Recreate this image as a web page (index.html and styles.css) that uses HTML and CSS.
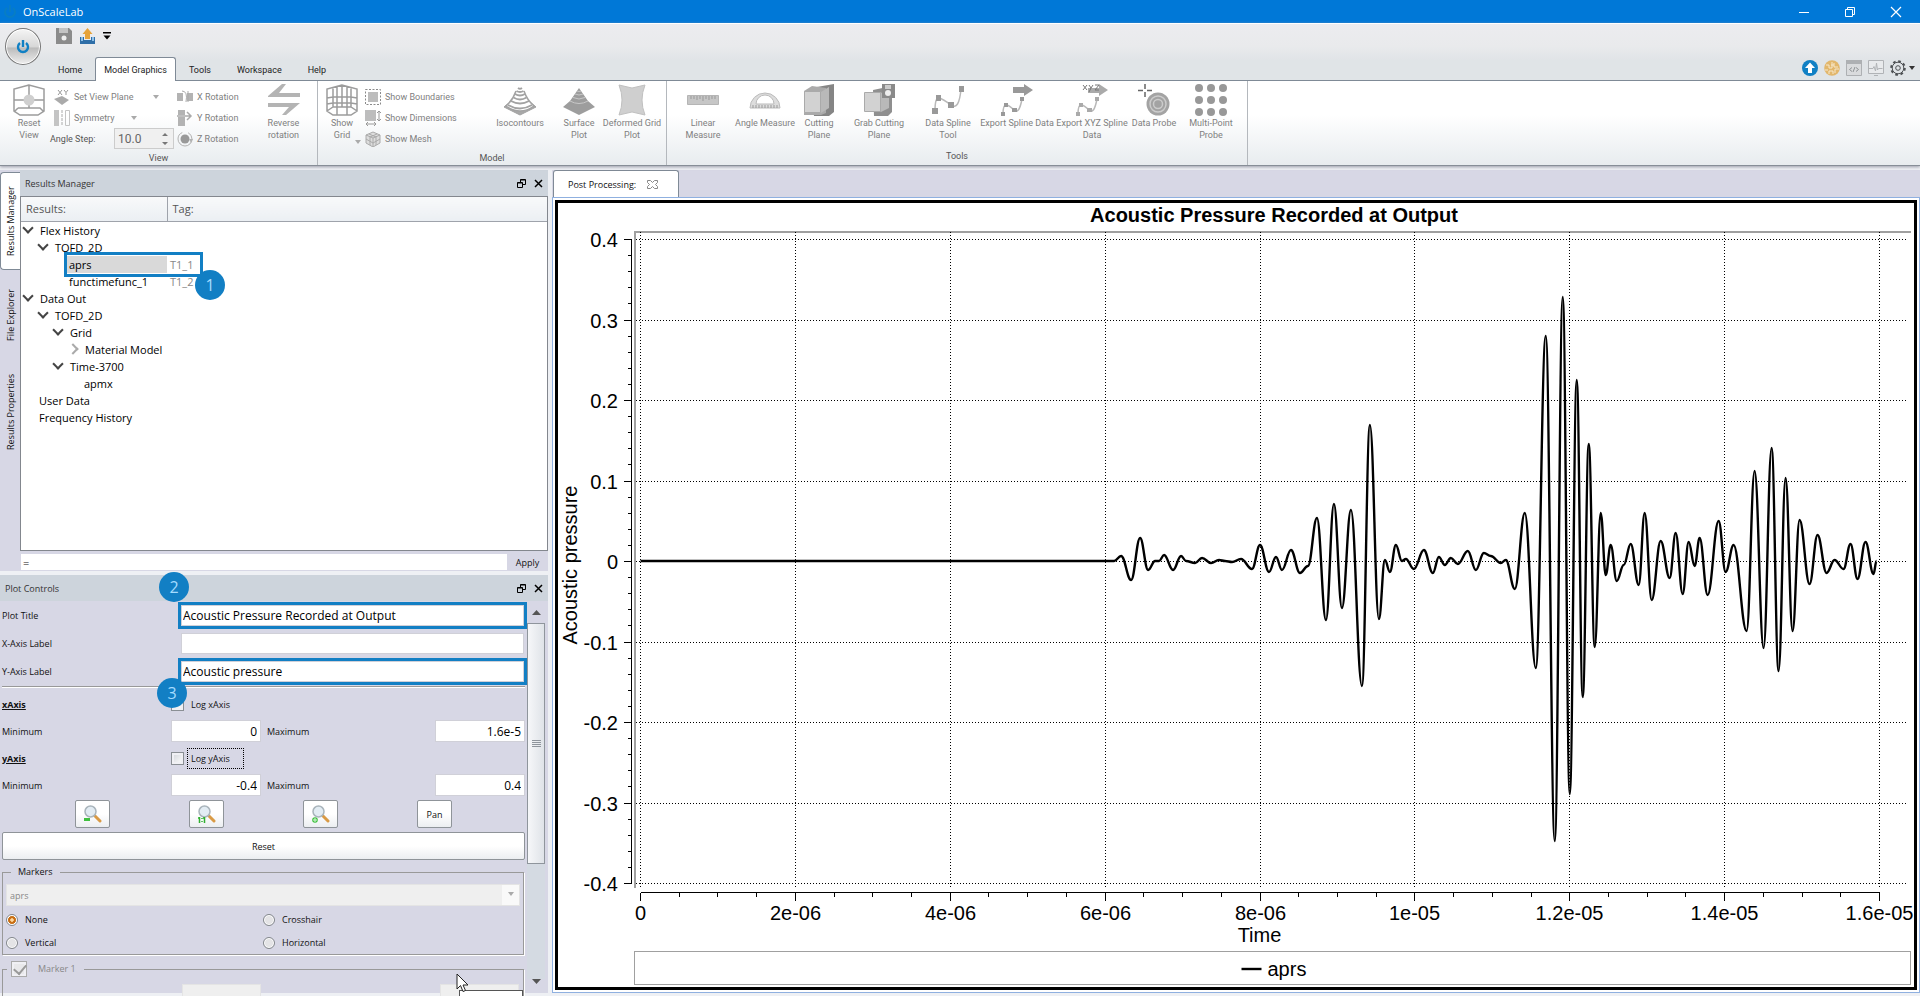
FILE: index.html
```html
<!DOCTYPE html>
<html lang="en">
  <head>
    <meta charset="UTF-8" />
    <meta name="viewport" content="width=device-width, initial-scale=1.0" />
    <title>OnScaleLab</title>
    <link rel="stylesheet" href="styles.css">
  </head>
  <body>
    <header class="titlebar">
      <svg class="app-icon" width="14" height="16" viewBox="0 0 14 16" fill="none" stroke="#0a7fc0" stroke-width="2"><path d="M4 4a5 5 0 1 0 6 0M7 1v7"/></svg>
      <h1>OnScaleLab</h1>
      <div class="window-buttons">
        <button aria-label="Minimize"><svg width="12" height="12" viewBox="0 0 12 12" stroke="#fff"><path d="M1 6.500h10"/></svg></button>
        <button aria-label="Restore"><svg width="12" height="12" viewBox="0 0 12 12" fill="none" stroke="#fff"><path d="M1.500 3.500h7v7h-7zM3.500 3V1.500h7v7H9"/></svg></button>
        <button aria-label="Close"><svg width="12" height="12" viewBox="0 0 12 12" stroke="#fff" stroke-width="1.200"><path d="M1 1l10 10M11 1L1 11"/></svg></button>
      </div>
    </header>

    <section class="ribbon">
      <div class="ribbon-top">
        <button class="orb" aria-label="Application menu">
          <svg width="14" height="16" viewBox="0 0 14 16" fill="none" stroke="#1180c4" stroke-width="2.400"><path d="M4 4a5 5 0 1 0 6 0M7 1v7"/></svg>
        </button>
        <div class="ribbon-bars">
          <div class="quick">
            <button aria-label="Save"><svg width="16" height="16" viewBox="0 0 16 16"><path fill="#8b8b8b" d="M0 0h13l3 3v13H0z"/><path fill="#c3c3c3" d="M3 0h9v5H3z"/><circle cx="8" cy="10" r="2.500" fill="#eee"/></svg></button>
            <button aria-label="Export"><svg width="17" height="16" viewBox="0 0 17 16"><path fill="#2f6fa8" d="M1 9h4v3h7V9h4v7H1z"/><path fill="#8fc0e8" d="M2 9h2v4H2zM13 9h2v4h-2z"/><path fill="#e6a33a" d="M8.500 0l5 6H11v5H6V6H3.500z"/></svg></button>
            <button aria-label="Customize toolbar"><svg width="8" height="8" viewBox="0 0 8 8"><path d="M0 0h8v1.500H0zM0.500 3.500h7L4 7.500z"/></svg></button>
          </div>
          <nav class="tabs">
            <a href="#">Home</a>
            <a href="#" class="active">Model Graphics</a>
            <a href="#">Tools</a>
            <a href="#">Workspace</a>
            <a href="#">Help</a>
          </nav>
        </div>
        <div class="status-icons">
          <svg width="16" height="16" viewBox="0 0 16 16"><circle cx="8" cy="8" r="8" fill="#1180c4"/><path fill="#fff" d="M8 2.500L13 8h-3v5H6V8H3z"/></svg>
          <svg width="16" height="16" viewBox="0 0 16 16"><circle cx="8" cy="8" r="7.800" fill="#e2b76c"/><path d="M2 5h3v3h3V2M5 14v-3h4v3M10 3v4h4M11 13V9h4M1 10h3M7 5h3" fill="none" stroke="#f7e8cb"/></svg>
          <svg width="16" height="16" viewBox="0 0 16 16"><path fill="#d9dbdd" stroke="#adb0b3" d="M.5.5h15v15H.5z"/><path fill="#adb0b3" d="M0 0h16v4H0z"/><path fill="none" stroke="#8f9396" d="M6 7.500L3.500 9.500 6 11.500M10 7.500l2.500 2-2.500 2M9 7l-2 5"/></svg>
          <svg width="16" height="16" viewBox="0 0 16 16" fill="none" stroke="#b0b3b6"><path fill="#e8eaec" d="M.5.5h15v13H.5z"/><path d="M6 15.500h4M1 8.500h4l1-2 1.500 4.500L8.500 3l1 7 1-1.500h4"/></svg>
          <button class="settings" aria-label="Settings">
            <svg width="16" height="16" viewBox="0 0 16 16" fill="none" stroke="#4e5154"><circle cx="8" cy="8" r="6.800" stroke-width="2" stroke-dasharray="2.700 2.640"/><circle cx="8" cy="8" r="5.800"/><circle cx="8" cy="8" r="2.300"/></svg>
            <svg width="6" height="4" viewBox="0 0 6 4"><path d="M0 0h6L3 4z" fill="#333"/></svg>
          </button>
        </div>
      </div>

      <div class="ribbon-body">
        <div class="group group-view">
          <div class="group-items">
            <button class="big">
              <svg width="32" height="32" viewBox="0 0 32 32" fill="none" stroke="#9c9c9c" stroke-width="1.500"><path d="M16 1L1 5v22l6 4h18l6-4V5zM16 1v23M1 16h30M5 24h22l4 4M5 24l-4 4"/><circle cx="16" cy="16" r="5.500" fill="#cfcfcf" stroke="none"/></svg>
              <span>Reset<br>View</span>
            </button>
            <div class="stack stack-plane">
              <button class="small"><svg width="16" height="16" viewBox="0 0 16 16"><path d="M4 1l4 5M8 1L4 6M10 1l2 2.500L14 1M12 3.500V6" stroke="#999" fill="none"/><path fill="#aaa" d="M0 10l8-3 7 4-7 5z"/></svg>Set View Plane<i class="caret far"></i></button>
              <button class="small"><svg width="16" height="16" viewBox="0 0 16 16"><path fill="#c4c4c4" d="M0 0h5v16H0z"/><path d="M8 0v16" stroke="#aaa" stroke-dasharray="3 1"/><path fill="none" stroke="#c4c4c4" d="M11.500.5h4v15h-4z"/></svg>Symmetry<i class="caret"></i></button>
              <div class="angle"><label for="angle">Angle Step:</label><div class="spin"><input id="angle" type="text" value="10.0" disabled><svg width="6" height="14" viewBox="0 0 6 14" fill="#777"><path d="M0 4h6L3 1zM0 10h6l-3 3z"/></svg></div></div>
            </div>
            <div class="stack stack-rotation">
              <button class="small"><svg width="16" height="16" viewBox="0 0 16 16" fill="#b3b3b3"><path d="M0 4h6v8H0zM10 4h6v8h-6z"/><path fill="none" stroke="#aaa" d="M5 2q6 0 4 11M11 2v11"/></svg>X Rotation</button>
              <button class="small"><svg width="16" height="16" viewBox="0 0 16 16" fill="#b3b3b3"><path d="M1 0h7v5H1zM1 7h7v9H1z"/><path fill="none" stroke="#aaa" stroke-width="1.500" d="M0 6h13M10 2l4 4-4 4"/></svg>Y Rotation</button>
              <button class="small"><svg width="16" height="16" viewBox="0 0 16 16"><circle cx="8" cy="8" r="4.500" fill="#999"/><circle cx="8" cy="8" r="7" fill="none" stroke="#b3b3b3" stroke-dasharray="30 6"/><path fill="#b3b3b3" d="M12 8h4l-2 4z"/></svg>Z Rotation</button>
            </div>
            <button class="big">
              <svg width="32" height="32" viewBox="0 0 32 32" fill="#b4b4b4"><path d="M0 12L14 0h4l-7 9h21v4H0zM32 19L18 31h-4l7-8H0v-4z"/></svg>
              <span>Reverse<br>rotation</span>
            </button>
          </div>
          <div class="group-name">View</div>
        </div>

        <div class="group group-model">
          <div class="group-items">
            <button class="big">
              <svg width="32" height="32" viewBox="0 0 32 32" fill="none" stroke="#9c9c9c" stroke-width="1.500"><path d="M16 1L1 5v22l6 4h18l6-4V5zM16 1v22M1 14l6-1h18l6 1M1 27l6-4h18l6 4M7 3v20M25 3v20M11 2v29M21 2v29M1 20l6-1h18l6 1"/></svg>
              <span>Show<br>Grid</span><i class="caret corner"></i>
            </button>
            <div class="stack stack-show">
              <button class="small"><svg width="16" height="16" viewBox="0 0 16 16"><path fill="#bdbdbd" d="M3 3h10v10H3z"/><path fill="none" stroke="#8a8a8a" stroke-dasharray="2 1.500" d="M.5.5h15v15H.5z"/></svg>Show Boundaries</button>
              <button class="small"><svg width="16" height="16" viewBox="0 0 16 16"><path fill="#bdbdbd" d="M0 0h11v11H0z"/><path fill="none" stroke="#999" d="M14 1v10M12 3l2-2 2 2M12 9l2 2 2-2M1 14h10M3 12l-2 2 2 2M9 12l2 2-2 2"/></svg>Show Dimensions</button>
              <button class="small"><svg width="16" height="16" viewBox="0 0 16 16" fill="#ddd" stroke="#aaa"><path d="M8 1l7 3v8l-7 4-7-4V4z"/><path fill="none" d="M1 4l7 3 7-3M8 7v9M1 8l7 4 7-4M4 3l7 3v8M12 3L5 6v8"/></svg>Show Mesh</button>
            </div>
            <button class="big">
              <svg width="32" height="32" viewBox="0 0 32 32" fill="none" stroke="#a2a2a2"><path fill="#a8a8a8" d="M0 23l6-5 10 7 10-7 6 5-16 8z"/><path fill="#fff" stroke-width="1.500" d="M12 7q-3 9-10 15 14 10 28 0Q23 16 20 7"/><path stroke-width="1.800" d="M14 4q2 1.500 4 0M12.500 7q3.500 2 7 0M11 10q5 3 10 0M9.500 13.500q6.500 4 13 0M7 17q9 5 18 0M4 21q12 7 24 0"/></svg>
              <span>Isocontours</span>
            </button>
            <button class="big">
              <svg width="32" height="32" viewBox="0 0 32 32"><path fill="#9d9d9d" d="M0 23l7-6 9-13 9 13 7 6-16 8z"/><path fill="none" stroke="#c8c8c8" d="M14 7q2 1 4 0M12 10q4 2 8 0M10 13.500q6 3 12 0M7 17q9 5 18 0"/></svg>
              <span>Surface<br>Plot</span>
            </button>
            <button class="big">
              <svg width="32" height="32" viewBox="0 0 32 32"><path fill="#cfcfcf" stroke="#c0c0c0" d="M3 1l13 3 13-3q-6 15 0 30l-13-3-13 3q6-15 0-30z"/></svg>
              <span>Deformed Grid<br>Plot</span>
            </button>
          </div>
          <div class="group-name">Model</div>
        </div>

        <div class="group group-tools">
          <div class="group-items">
            <button class="big">
              <svg width="32" height="32" viewBox="0 0 32 32"><path fill="#c6c6c6" stroke="#b5b5b5" d="M.5 11.500h31v9H.5z"/><path stroke="#999" d="M4 12v3M7 12v3M10 12v4M13 12v3M16 12v5M19 12v3M22 12v4M25 12v3M28 12v3"/></svg>
              <span>Linear<br>Measure</span>
            </button>
            <button class="big">
              <svg width="32" height="32" viewBox="0 0 32 32"><path fill="#ddd" stroke="#bbb" d="M1 24a15 15 0 0 1 30 0z"/><path fill="#fff" stroke="#bbb" d="M7 20a9 9 0 0 1 18 0z"/><path stroke="#999" d="M4 21v3M7 21v3M10 21v3M13 21v3M16 21v3M19 21v3M22 21v3M25 21v3M28 21v3"/></svg>
              <span>Angle Measure</span>
            </button>
            <button class="big">
              <svg width="32" height="32" viewBox="0 0 32 32"><path fill="#858585" d="M8 4l23-4v28l-5 4H11z"/><path fill="#aaa" d="M1 7l8-5 14 2v25l-5 2H1z"/><path fill="#d2d2d2" stroke="#aaa" d="M1.500 7.500h16v21h-16z"/><path fill="#b9b9b9" d="M18 8l8-5v21l-8 5z"/></svg>
              <span>Cutting<br>Plane</span>
            </button>
            <button class="big">
              <svg width="32" height="32" viewBox="0 0 32 32"><path fill="#8f8f8f" d="M10 6l19-4v26l-4 4H11z"/><path fill="#d2d2d2" stroke="#aaa" d="M1.500 8.500h16v19h-16z"/><path fill="#b9b9b9" d="M18 9l8-5v20l-8 4z"/><path fill="#8a8a8a" d="M19 0h13v14H19z"/><path fill="#ccc" d="M22 1h6v4h-6z"/><circle cx="25" cy="9" r="3" fill="#eee"/></svg>
              <span>Grab Cutting<br>Plane</span>
            </button>
            <button class="big">
              <svg width="32" height="32" viewBox="0 0 32 32"><path fill="none" stroke="#b9b9b9" stroke-width="1.500" d="M3 27q0-14 4-13t12 7 10-16"/><path fill="#999" d="M0 24h6v6H0zM4 11h5v6H4zM16 18h6v6h-6zM27 2h5v6h-5z"/></svg>
              <span>Data Spline<br>Tool</span>
            </button>
            <button class="big">
              <svg width="32" height="32" viewBox="0 0 32 32"><path fill="none" stroke="#b9b9b9" stroke-width="1.500" d="M2 30q0-9 3-9t8 5 8-11"/><path fill="#999" d="M0 28h4v4H0zM3 19h4v4H3zM11 24h5v4h-5zM19 13h4v4h-4zM12 3h11V0l9 6-9 6V9H12z"/></svg>
              <span>Export Spline Data</span>
            </button>
            <button class="big">
              <svg width="32" height="32" viewBox="0 0 32 32"><path fill="none" stroke="#b9b9b9" stroke-width="1.500" d="M2 30q0-9 3-9t8 5 8-11"/><path fill="#aaa" d="M0 28h4v4H0zM3 19h4v4H3zM11 24h5v4h-5zM19 13h4v4h-4zM12 4h11V0l9 6-9 6V9H12z"/><path fill="none" stroke="#777" d="M7 1l4 5M11 1L7 6M13 1l2 3 2-3M15 4l-2 4M19 1h4l-4 5h4"/></svg>
              <span>Export XYZ Spline<br>Data</span>
            </button>
            <button class="big">
              <svg width="32" height="32" viewBox="0 0 32 32"><circle cx="20" cy="20" r="11.500" fill="#a3a3a3"/><g fill="none" stroke="#ccc" stroke-width="1.500"><circle cx="20" cy="20" r="8"/><circle cx="20" cy="20" r="4.500"/></g><path fill="none" stroke="#666" stroke-width="1.500" d="M7 0v5M7 8v5M0 6.500h5M9 6.500h5"/></svg>
              <span>Data Probe</span>
            </button>
            <button class="big">
              <svg width="32" height="32" viewBox="0 0 32 32" fill="#989898"><circle cx="4" cy="4" r="4"/><circle cx="16" cy="4" r="4"/><circle cx="28" cy="4" r="4"/><circle cx="4" cy="16" r="4"/><circle cx="16" cy="16" r="4"/><circle cx="28" cy="16" r="4"/><circle cx="4" cy="28" r="4"/><circle cx="16" cy="28" r="4"/><circle cx="28" cy="28" r="4"/></svg>
              <span>Multi-Point<br>Probe</span>
            </button>
          </div>
          <div class="group-name">Tools</div>
        </div>
      </div>
    </section>

    <main>
      <aside class="dock">
        <div class="results-area">
          <div class="side-tabs">
            <button class="active">Results Manager</button>
            <button>File Explorer</button>
            <button>Results Properties</button>
          </div>
          <section class="results">
            <div class="dock-title">
              <h2>Results Manager</h2>
              <button aria-label="Float"><svg width="9" height="9" viewBox="0 0 9 9" fill="none" stroke="#000"><path d="M.5 3.500h5v5h-5zM3.500 3V.5h5v5H6M.5 4h5M3.500 1h5"/></svg></button>
              <button aria-label="Close"><svg width="9" height="9" viewBox="0 0 9 9" stroke="#000" stroke-width="1.500"><path d="M1 1l7 7M8 1L1 8"/></svg></button>
            </div>
            <div class="tree">
              <table>
                <thead><tr><th class="col-name">Results:</th><th>Tag:</th></tr></thead>
                <tbody>
                  <tr><td class="lv0 open">Flex History</td><td></td></tr>
                  <tr><td class="lv1 open">TOFD_2D</td><td></td></tr>
                  <tr class="selected"><td class="lv2"><span>aprs</span><i class="callout-box"></i><b class="badge badge-1">1</b></td><td>T1_1</td></tr>
                  <tr><td class="lv2">functimefunc_1</td><td>T1_2</td></tr>
                  <tr><td class="lv0 open">Data Out</td><td></td></tr>
                  <tr><td class="lv1 open">TOFD_2D</td><td></td></tr>
                  <tr><td class="lv2 open">Grid</td><td></td></tr>
                  <tr><td class="lv3 shut">Material Model</td><td></td></tr>
                  <tr><td class="lv2 open">Time-3700</td><td></td></tr>
                  <tr><td class="lv3">apmx</td><td></td></tr>
                  <tr><td class="lv0">User Data</td><td></td></tr>
                  <tr><td class="lv0">Frequency History</td><td></td></tr>
                </tbody>
              </table>
            </div>
            <div class="formula">
              <input type="text" value="=" aria-label="Formula">
              <button>Apply</button>
            </div>
          </section>
        </div>

        <section class="controls">
          <div class="dock-title">
            <h2>Plot Controls</h2>
            <button aria-label="Float"><svg width="9" height="9" viewBox="0 0 9 9" fill="none" stroke="#000"><path d="M.5 3.500h5v5h-5zM3.500 3V.5h5v5H6M.5 4h5M3.500 1h5"/></svg></button>
            <button aria-label="Close"><svg width="9" height="9" viewBox="0 0 9 9" stroke="#000" stroke-width="1.500"><path d="M1 1l7 7M8 1L1 8"/></svg></button>
          </div>
          <div class="controls-scroll">
            <form class="controls-form">
              <div class="row">
                <label for="plotTitle">Plot Title</label>
                <input id="plotTitle" class="marked" type="text" value="Acoustic Pressure Recorded at Output">
                <b class="badge badge-2">2</b>
              </div>
              <div class="row">
                <label for="xLabel">X-Axis Label</label>
                <input id="xLabel" type="text">
              </div>
              <div class="row">
                <label for="yLabel">Y-Axis Label</label>
                <input id="yLabel" class="marked" type="text" value="Acoustic pressure">
                <b class="badge badge-3">3</b>
              </div>
              <hr>
              <div class="axis-row"><h3>xAxis</h3><input id="logX" type="checkbox"><label for="logX">Log xAxis</label></div>
              <div class="range-row">
                <label for="xMin">Minimum</label><input id="xMin" type="text" value="0">
                <label for="xMax">Maximum</label><input id="xMax" type="text" value="1.6e-5">
              </div>
              <div class="axis-row"><h3>yAxis</h3><input id="logY" type="checkbox"><label for="logY" class="focused">Log yAxis</label></div>
              <div class="range-row">
                <label for="yMin">Minimum</label><input id="yMin" type="text" value="-0.4">
                <label for="yMax">Maximum</label><input id="yMax" type="text" value="0.4">
              </div>
              <div class="zoom-row">
                <button type="button" aria-label="Zoom out"><svg width="18" height="18" viewBox="0 0 18 18"><path stroke="#d99a45" stroke-width="3" stroke-linecap="round" d="M11 11l5 5"/><circle cx="6.500" cy="6.500" r="5.500" fill="#e2ecf3" stroke="#a9b4bb" stroke-width="1.500"/><path fill="#3fc03f" d="M0 13h6v3H0z"/></svg></button>
                <button type="button" aria-label="Zoom one to one"><svg width="18" height="18" viewBox="0 0 18 18"><path stroke="#d99a45" stroke-width="3" stroke-linecap="round" d="M11 11l5 5"/><circle cx="6.500" cy="6.500" r="5.500" fill="#e2ecf3" stroke="#a9b4bb" stroke-width="1.500"/><path stroke="#2fb02f" stroke-width="1.500" d="M1.500 12v6M6.500 12v6M4 13v1M4 16v1M0 13h2M5 13h2"/></svg></button>
                <button type="button" aria-label="Zoom in"><svg width="18" height="18" viewBox="0 0 18 18"><path stroke="#d99a45" stroke-width="3" stroke-linecap="round" d="M11 11l5 5"/><circle cx="6.500" cy="6.500" r="5.500" fill="#e2ecf3" stroke="#a9b4bb" stroke-width="1.500"/><circle cx="3" cy="15" r="2.800" fill="#3fc03f"/><path stroke="#d8f5d8" d="M1 15h4M3 13v4"/></svg></button>
                <button type="button">Pan</button>
              </div>
              <button type="button" class="reset">Reset</button>
              <fieldset>
                <legend>Markers</legend>
                <div class="combo"><select disabled aria-label="Marker curve"><option>aprs</option></select></div>
                <div class="radios">
                  <label><input type="radio" name="marker" checked>None</label>
                  <label><input type="radio" name="marker">Crosshair</label>
                  <label><input type="radio" name="marker">Vertical</label>
                  <label><input type="radio" name="marker">Horizontal</label>
                </div>
              </fieldset>
              <fieldset class="marker-one">
                <legend><label><input type="checkbox" checked disabled>Marker 1</label></legend>
                <div class="marker-inputs">
                  <input type="text" disabled aria-label="Marker 1 x">
                  <input type="text" disabled aria-label="Marker 1 y">
                </div>
              </fieldset>
            </form>
            <div class="scrollbar">
              <svg width="9" height="5" viewBox="0 0 9 5"><path d="M0 5h9L4.500 0z" fill="#555"/></svg>
              <div class="thumb"></div>
              <div class="track"></div>
              <svg width="9" height="5" viewBox="0 0 9 5"><path d="M0 0h9L4.500 5z" fill="#555"/></svg>
            </div>
          </div>
          <div class="tooltip">Marker 1</div>
          <svg class="cursor" width="13" height="20" viewBox="0 0 13 20"><path fill="#fff" stroke="#222" d="M1 1v15l3.500-3.500L7 18.500l2.500-1L7 12h5z"/></svg>
        </section>
      </aside>

      <section class="workspace">
        <div class="doc-tab">Post Processing: <button aria-label="Close tab"><svg width="11" height="9" viewBox="0 0 11 9" fill="#fff" stroke="#888"><path d="M.5.5h3l2 2 2-2h3v2l-2 2 2 2v2h-3l-2-2-2 2h-3v-2l2-2-2-2z"/></svg></button></div>
        <div class="doc-pane">
          <div class="plot" id="plot"></div>
        </div>
      </section>
    </main>

    <script src="plot.js"></script>
  </body>
</html>
```
FILE: styles.css
```css
* {
  box-sizing: border-box;
}
html {
  overflow: hidden;
}
body {
  margin: 0;
  height: 100vh;
  display: flex;
  flex-direction: column;
  overflow: hidden;
  font-family: "Open Sans", "Noto Sans", sans-serif;
  font-size: 9px;
  color: #111;
  background: #e6e6ee;
}
h1, h2, h3 {
  margin: 0;
  font-weight: normal;
}
button, input, select {
  font: inherit;
  color: inherit;
  margin: 0;
}
button {
  border: 0;
  padding: 0;
  background: none;
}
svg {
  display: block;
  flex: none;
}

/* title bar */
.titlebar {
  display: flex;
  align-items: center;
  height: 23px;
  flex: none;
  padding-left: 3px;
  background: #0078d7;
  color: #fff;
}
.titlebar h1 {
  flex: 1;
  margin-left: 6px;
  font-size: 11px;
}
.app-icon {
  opacity: 0.8;
}
.window-buttons {
  display: flex;
  margin-right: 1px;
}
.window-buttons button {
  width: 46px;
  height: 20px;
  display: flex;
  align-items: center;
  justify-content: center;
}

/* ribbon */
.ribbon {
  flex: none;
  border-bottom: 1px solid #878e97;
  box-shadow: 0 1px 3px #9a9ca8;
  z-index: 1;
  font-family: Roboto, "Open Sans", sans-serif;
}
.ribbon-top {
  display: flex;
  height: 58px;
  border-top: 1px solid #fff;
  border-bottom: 1px solid #7f8a96;
  background: linear-gradient(#ececef, #e9eaec 40%, #e0e4e7 65%);
}
.orb {
  width: 36px;
  height: 37px;
  margin: 4px 0 0 5px;
  display: flex;
  align-items: center;
  justify-content: center;
  border: 1px solid #777;
  border-radius: 50%;
  background: linear-gradient(#f5f5f5, #d8d8d8 50%, #bcbcbc 55%, #eee);
  box-shadow: inset 0 0 0 1px #fff;
}
.ribbon-bars {
  flex: 1;
  display: flex;
  flex-direction: column;
  justify-content: space-between;
}
.quick {
  display: flex;
  align-items: center;
  gap: 7px;
  padding: 4px 0 0 15px;
}
.tabs {
  display: flex;
  margin-bottom: -1px;
}
.tabs a {
  height: 24px;
  padding: 0 12px;
  line-height: 24px;
  border: 1px solid transparent;
  border-bottom: 0;
  color: #222;
  text-decoration: none;
}
.tabs a:first-child {
  padding-left: 16px;
}
.tabs a.active {
  padding: 0 8px;
  background: #fff;
  border-color: #7f8a96;
  border-radius: 3px 3px 0 0;
}
.status-icons {
  display: flex;
  align-items: center;
  gap: 6px;
  padding: 31px 5px 0 0;
}
.settings {
  display: flex;
  align-items: center;
  gap: 3px;
}
.ribbon-body {
  display: flex;
  height: 84px;
  background: linear-gradient(#fff 40%, #e8ecef);
  color: #808080;
}
.group {
  display: flex;
  flex-direction: column;
  border-right: 1px solid #b4b8bd;
}
.group-view {
  width: 318px;
}
.group-model {
  width: 349px;
}
.group-tools {
  width: 581px;
}
.group-items {
  flex: 1;
  display: grid;
}
.group-view .group-items {
  grid-template-columns: 50px 124px 76px 67px;
}
.group-model .group-items {
  padding-left: 1px;
  grid-template-columns: 46px 118px 74px 44px 62px;
}
.group-tools .group-items {
  padding-left: 5px;
  grid-template-columns: 62px 62px 46px 74px 64px 74px 76px 48px 66px;
}
.group-view .group-items > .big:first-child {
  width: 58px;
}
.group-name {
  height: 18px;
  line-height: 18px;
  text-align: center;
  color: #555;
}
.big {
  position: relative;
  display: flex;
  flex-direction: column;
  align-items: center;
  padding-top: 3px;
  line-height: 12px;
  white-space: nowrap;
}
.big span {
  margin-top: 1px;
}
.stack {
  display: grid;
  grid-template-rows: 21px 21px 21px;
  padding-top: 5px;
}
.stack-rotation {
  padding-left: 3px;
}
.stack-plane {
  padding-left: 4px;
}
.small {
  display: flex;
  align-items: center;
  gap: 4px;
  white-space: nowrap;
}
.caret {
  width: 0;
  border: 3px solid transparent;
  border-top: 4px solid #aaa;
  border-bottom: 0;
  margin-left: 12px;
}
.caret.far {
  margin-left: 16px;
}
.caret.corner {
  position: absolute;
  right: 4px;
  bottom: 5px;
}
.angle {
  display: flex;
  align-items: center;
  justify-content: space-between;
  margin-left: -4px;
  color: #555;
}
.spin {
  width: 60px;
  height: 21px;
  display: flex;
  align-items: center;
  padding-right: 5px;
  border: 1px solid #ccc;
  background: #f0f0f0;
}
.spin input {
  flex: 1;
  min-width: 0;
  padding: 0 3px;
  border: 0;
  background: none;
  font-size: 12px;
  color: #666;
}

/* main area */
main {
  flex: 1;
  min-height: 0;
  display: flex;
  gap: 4px;
  padding: 4px 0 3px;
  background: #eef0f4;
}
.dock {
  width: 548px;
  flex: none;
  display: flex;
  flex-direction: column;
  gap: 4px;
}
.results-area {
  display: flex;
  height: 401px;
  flex: none;
  background: #d7d7e5;
}
.side-tabs {
  width: 20px;
  display: grid;
  grid-template-rows: 98px 91px 102px;
  padding-top: 2px;
}
.side-tabs button {
  writing-mode: vertical-rl;
  transform: rotate(180deg);
  text-align: center;
  line-height: 19px;
}
.side-tabs button.active {
  background: #fff;
  border: 1px solid #7f8a96;
  border-left: 0;
  border-radius: 0 4px 4px 0;
}
.results {
  flex: 1;
  display: flex;
  flex-direction: column;
}
.dock-title {
  display: flex;
  align-items: center;
  flex: none;
  gap: 8px;
  height: 26px;
  padding: 0 5px;
  background: #cdd4dc;
}
.dock-title h2 {
  flex: 1;
  font-size: 9px;
  color: #333;
}
.tree {
  flex: 1;
  border: 1px solid #83878e;
  background: #fff;
  font-size: 11px;
  color: #000;
}
.tree table {
  width: 100%;
  border-collapse: collapse;
  table-layout: fixed;
}
.tree th {
  height: 24px;
  padding: 0 5px;
  border-bottom: 1px solid #9fa3ab;
  background: linear-gradient(#f8f9fa, #ebeff3);
  color: #555;
  font-weight: normal;
  text-align: left;
}
.tree .col-name {
  width: 146px;
  border-right: 1px solid #9fa3ab;
}
.tree td {
  position: relative;
  height: 17px;
  padding: 0 3px;
  line-height: 17px;
  white-space: nowrap;
}
.tree td:nth-child(2) {
  color: #888;
}
.tree .lv0 { padding-left: 18px; }
.tree .lv1 { padding-left: 33px; }
.tree .lv2 { padding-left: 48px; }
.tree .lv3 { padding-left: 63px; }
.open::before,
.shut::before {
  content: "";
  display: inline-block;
  width: 6px;
  height: 6px;
  margin: 0 8px 3px -15px;
  border: solid #444;
  border-width: 0 2px 2px 0;
  transform: rotate(45deg);
}
.shut::before {
  margin-bottom: 1px;
  border-color: #aaa;
  transform: rotate(-45deg);
}
.selected .lv2 {
  padding: 0 0 0 46px;
}
.selected span {
  display: block;
  padding-left: 2px;
  background: #d9d9d9;
}
.callout-box {
  position: absolute;
  left: 43px;
  top: -4px;
  width: 139px;
  height: 25px;
  border: 3px solid #127fc4;
  z-index: 1;
}
.badge {
  position: absolute;
  width: 30px;
  height: 30px;
  border-radius: 50%;
  background: #127fc4;
  color: #a5dcff;
  font: 16px/30px "Open Sans", sans-serif;
  text-align: center;
  z-index: 2;
}
.badge-1 {
  left: 174px;
  top: 14px;
}
.formula {
  display: flex;
  height: 20px;
  padding: 3px 0 1px 1px;
}
.formula input {
  flex: 1;
  padding: 0 2px;
  border: 0;
  background: #fff;
  font-size: 11px;
}
.formula button {
  width: 41px;
}

/* plot controls */
.controls {
  position: relative;
  flex: 1;
  min-height: 0;
  display: flex;
  flex-direction: column;
  background: #d7d7e5;
}
.controls-scroll {
  flex: 1;
  min-height: 0;
  display: flex;
}
.controls-form {
  flex: 1;
  padding-left: 2px;
}
.controls input[type="text"] {
  border: 1px solid #d0d0d8;
  background: #fff;
  font-size: 12px;
  color: #000;
}
.row {
  position: relative;
  display: flex;
  align-items: center;
  height: 28px;
}
.row label {
  width: 179px;
}
.row input {
  flex: 1;
  height: 21px;
  margin-right: 1px;
  padding: 0 1px;
}
.controls .marked {
  border: 0;
  outline: 3px solid #127fc4;
}
.badge-2 {
  left: 157px;
  top: -29px;
}
.badge-3 {
  left: 155px;
  top: 21px;
}
.controls-form hr {
  height: 2px;
  margin: 1px 0 2px;
  border: 0;
  border-top: 1px solid #999;
  border-bottom: 1px solid #fff;
}
.axis-row {
  display: flex;
  align-items: center;
  height: 28px;
}
.axis-row h3 {
  width: 169px;
  font-size: 9px;
  font-weight: bold;
  text-decoration: underline;
}
.axis-row label {
  margin-left: 3px;
  padding: 3px 13px 3px 3px;
  border: 1px solid transparent;
}
.axis-row label.focused {
  border: 1px dotted #000;
}
input[type="checkbox"] {
  appearance: none;
  width: 13px;
  height: 13px;
  border: 1px solid #8a8f94;
  background: linear-gradient(135deg, #d0d3d8, #fff);
  box-shadow: inset 0 0 0 2px #f0f0f4;
}
.range-row {
  display: flex;
  align-items: center;
  height: 26px;
}
.range-row label {
  flex: 1;
}
.range-row label:first-child {
  flex: none;
  width: 169px;
}
.range-row input {
  width: 90px;
  height: 22px;
  padding: 0 3px;
  text-align: right;
}
.range-row input + label {
  padding-left: 6px;
}
.zoom-row {
  display: flex;
  gap: 79px;
  padding: 2px 0 4px 73px;
}
.zoom-row button,
.reset {
  height: 28px;
  border: 1px solid #8f9499;
  border-radius: 2px;
  background: linear-gradient(#fff 50%, #eceef1);
}
.zoom-row button {
  width: 35px;
  display: flex;
  align-items: center;
  justify-content: center;
}
.reset {
  display: block;
  width: 100%;
}
fieldset {
  min-width: 0;
  height: 90px;
  margin: 5px 1px 6px 0;
  padding: 0 3px;
  border: 1px solid #999;
  box-shadow: 1px 1px 0 #fff;
}
legend {
  height: 14px;
  line-height: 14px;
  margin-left: 5px;
  padding: 0 7px;
}
.combo {
  position: relative;
  margin-top: 5px;
}
.combo select {
  width: 100%;
  height: 22px;
  padding: 0 3px;
  appearance: none;
  border: 1px solid #e4e4e4;
  border-radius: 0;
  background: linear-gradient(90deg, transparent calc(100% - 17px), #f9f9f9 0) #efefef;
  color: #888;
  opacity: 1;
}
.combo::after {
  content: "";
  position: absolute;
  right: 6px;
  top: 8px;
  border: 3px solid transparent;
  border-top: 4px solid #aaa;
  border-bottom: 0;
}
.radios {
  display: grid;
  grid-template-columns: 1fr 1fr;
  grid-auto-rows: 23px;
  margin-top: 2px;
}
.radios label {
  display: flex;
  align-items: center;
  gap: 7px;
}
input[type="radio"] {
  appearance: none;
  width: 12px;
  height: 12px;
  border: 1px solid #83878c;
  border-radius: 50%;
  background: #e4e4e6;
  box-shadow: inset 0 0 0 1px #fff;
}
input[type="radio"]:checked {
  background: radial-gradient(#ffd9a0 20%, #c86e14 30%, #c86e14 55%, #fff 60%);
}
.marker-one {
  height: 40px;
  margin: 0 1px 0 0;
  border-bottom: 0;
  color: #888;
}
.marker-one legend {
  height: 16px;
  margin-left: 1px;
  padding: 0 8px 0 4px;
}
.marker-one legend label {
  display: flex;
  align-items: center;
  gap: 11px;
}
.marker-one input[type="checkbox"] {
  width: 16px;
  height: 16px;
  border-color: #aaa;
  background: #e8e8ea;
}
.marker-one input[type="checkbox"]::after {
  content: "";
  display: block;
  width: 6px;
  height: 10px;
  margin: 0 4px;
  border: solid #999;
  border-width: 0 2px 2px 0;
  transform: rotate(40deg);
}
.marker-inputs {
  display: grid;
  grid-template-columns: 79px 79px;
  gap: 179px;
  margin: 7px 0 0 176px;
}
.controls .marker-inputs input {
  width: 79px;
  height: 21px;
  border: 1px solid #e4e4e4;
  background: #efefef;
}
.scrollbar {
  width: 23px;
  display: flex;
  flex-direction: column;
  align-items: center;
  padding: 9px 3px 9px 2px;
}
.thumb {
  width: 18px;
  height: 241px;
  margin-top: 8px;
  border: 1px solid #8f959c;
  background:
    repeating-linear-gradient(#8f959c 0 1px, transparent 1px 2px) center / 9px 7px no-repeat,
    linear-gradient(90deg, #f6f7f9, #dfe3e8);
}
.track {
  flex: 1;
  width: 18px;
  background: #d4dae2;
}
.tooltip {
  position: absolute;
  left: 459px;
  bottom: -16px;
  width: 64px;
  height: 19px;
  padding: 0 3px;
  border: 1px solid #555;
  background: #fff;
  font-size: 11px;
  line-height: 17px;
}
.cursor {
  position: absolute;
  left: 456px;
  bottom: 0;
}

/* document area */
.workspace {
  flex: 1;
  min-width: 0;
  display: flex;
  flex-direction: column;
  background: #d7d7e5;
}
.doc-tab {
  align-self: flex-start;
  display: flex;
  align-items: center;
  gap: 11px;
  height: 27px;
  margin-left: 1px;
  padding: 0 20px 0 14px;
  border: 1px solid #7f8a96;
  border-bottom: 0;
  border-radius: 3px 3px 0 0;
  background: #fff;
}
.doc-pane {
  flex: 1;
  min-height: 0;
  padding: 2px;
  border: 1px solid #8fb0e0;
  background: #fff;
}
.plot {
  height: 100%;
  border: 3px solid #000;
  overflow: hidden;
}
.plot text {
  font: 20px "Liberation Sans", Arial, sans-serif;
  text-anchor: middle;
}
.plot .title {
  font-weight: bold;
}
.plot .y-tick {
  text-anchor: end;
}
.plot .legend-text {
  text-anchor: start;
}
.plot .grid {
  fill: none;
  stroke: #000;
  stroke-dasharray: 1 2;
  shape-rendering: crispEdges;
}
.plot .axis {
  fill: none;
  stroke: #000;
  shape-rendering: crispEdges;
}
.plot .frame {
  fill: none;
  stroke: #a0a0a0;
  stroke-width: 2;
}
.plot .legend-box {
  fill: none;
  stroke: #a0a0a0;
}
.plot .curve {
  fill: none;
  stroke: #000;
  stroke-width: 2.4;
  stroke-linejoin: round;
}
```
FILE: plot.js
```js
const plot = document.getElementById('plot');

// turning points of the aprs trace: time as n / 1240 of the x range,
// pressure as n / 322 of the y maximum
const SPAN_X = 1240;
const SPAN_Y = 322;
const aprs = [
  [0, 0], [474, 0], [481, 5], [491, -19], [500, 23], [508, -9], [515, 0], [519, 0], [524, 6], [533, -9],
  [541, 5], [546, 0], [555, -2], [562, 3], [571, -2], [579, 1], [585, 0], [592, -1], [601, 2], [612, -8],
  [620, 16], [629, -11], [636, 4], [642, -9], [651, 11], [660, -12], [668, -5], [677, 43], [686, -59],
  [694, 57], [702, -47], [711, 51], [722, -125], [730, 136], [739, -58], [745, 1], [750, -11], [756, 16],
  [762, 0], [766, 2], [774, -8], [784, 11], [793, -12], [799, 4], [805, -4], [811, 3], [818, -3],
  [828, 10], [836, -9], [844, 8], [851, 5], [861, -2], [866, 1], [875, -28], [885, 48], [896, -107],
  [906, 225], [915, -280], [923, 264], [930, -233], [937, 181], [943, -136], [949, 117], [955, -86],
  [961, 48], [966, -14], [971, 16], [977, -20], [984, -4], [991, 17], [999, -24], [1005, 48], [1012, -39],
  [1021, 20], [1030, -17], [1036, 28], [1043, -33], [1049, 19], [1055, -5], [1060, 23], [1068, -34],
  [1079, 40], [1086, -11], [1094, 16], [1107, -70], [1115, 90], [1124, -87], [1132, 113], [1139, -110],
  [1146, 83], [1153, -70], [1160, 41], [1170, -23], [1178, 26], [1187, -12], [1195, 1], [1204, -8],
  [1211, 17], [1218, -18], [1226, 19], [1234, -13], [1237, 0]
];
const xTicks = ['0', '2e-06', '4e-06', '6e-06', '8e-06', '1e-05', '1.2e-05', '1.4e-05', '1.6e-05'];
const yTicks = ['0.4', '0.3', '0.2', '0.1', '0', '-0.1', '-0.2', '-0.3', '-0.4'];

function text(x, y, label, cls = '', extra = '') {
  return `<text x="${x}" y="${y}" class="${cls}" ${extra}>${label}</text>`;
}

function drawPlot() {
  const w = plot.clientWidth;
  const h = plot.clientHeight;
  const left = 82, right = w - 35, top = 36, bottom = h - 104;
  const px = f => Math.round(left + f * (right - left)) + 0.5;
  const py = f => Math.round(top + f * (bottom - top)) + 0.5;
  const midY = (top + bottom) / 2;
  const midX = (left + right) / 2;
  const axisX = left - 9 + 0.5;
  const axisY = bottom + 9.5;

  let grid = '', axis = `M${axisX} ${py(0)}V${py(1)}M${px(0)} ${axisY}H${px(1)}`, labels = '';
  for (let i = 0; i <= 32; i++) {
    const x = px(i / 32);
    axis += `M${x} ${axisY}v${i % 4 ? 4 : 8}`;
    if (i % 4 === 0) {
      grid += `M${x} ${top - 7}V${bottom + 4}`;
      labels += text(x, bottom + 37, xTicks[i / 4]);
    }
  }
  for (let i = 0; i <= 40; i++) {
    const y = py(i / 40);
    axis += `M${axisX} ${y}h${i % 5 ? -4 : -8}`;
    if (i % 5 === 0) {
      grid += `M${left - 4} ${y}H${w - 6}`;
      labels += text(left - 22, y + 7, yTicks[i / 5], 'y-tick');
    }
  }

  // ease horizontally in and out of each turning point
  const zero = Math.round(midY);
  let curve = '';
  let prev = 0;
  aprs.forEach(([a, b], i) => {
    const x = left + a / SPAN_X * (right - left) + 0.5;
    const y = zero - b / SPAN_Y * (bottom - top) / 2;
    if (i === 0) {
      curve = `M${x} ${y}`;
    } else {
      const c = (x - prev[0]) * 0.4;
      curve += `C${prev[0] + c} ${prev[1]} ${x - c} ${y} ${x} ${y}`;
    }
    prev = [x, y];
  });

  plot.innerHTML = `<svg width="${w}" height="${h}">
    <path class="frame" d="M${left - 5} ${bottom + 5}V${top - 7}H${w - 3}"/>
    <path class="grid" d="${grid}"/>
    <path class="axis" d="${axis}"/>
    <path class="curve" d="${curve}"/>
    ${labels}
    ${text((left + w - 6) / 2, 19, 'Acoustic Pressure Recorded at Output', 'title')}
    ${text(midX, h - 45, 'Time')}
    ${text(0, 0, 'Acoustic pressure', '', `transform="translate(19 ${midY + 4}) rotate(-90)"`)}
    <rect class="legend-box" x="${left - 5.5}" y="${h - 35.5}" width="${w - left + 2}" height="33"/>
    <path class="curve" d="M${midX - 18} ${h - 18}h20"/>
    ${text(midX + 8, h - 11, 'aprs', 'legend-text')}
  </svg>`;
}

drawPlot();
window.addEventListener('resize', drawPlot);
```
